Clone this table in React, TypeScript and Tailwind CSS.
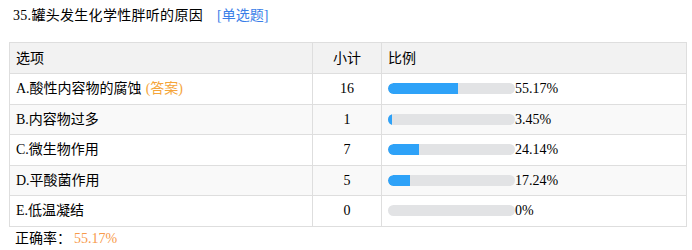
const rows = [
  { label: "A.酸性内容物的腐蚀", answer: true, count: 16, pct: 55.17, text: "55.17%" },
  { label: "B.内容物过多", answer: false, count: 1, pct: 3.45, text: "3.45%" },
  { label: "C.微生物作用", answer: false, count: 7, pct: 24.14, text: "24.14%" },
  { label: "D.平酸菌作用", answer: false, count: 5, pct: 17.24, text: "17.24%" },
  { label: "E.低温凝结", answer: false, count: 0, pct: 0, text: "0%" },
];

export default function App() {
  return (
    <div
      className="w-[692px] h-[250px] bg-white text-[14px] text-black overflow-hidden"
      style={{ fontFamily: '"Liberation Serif", "Noto Sans CJK SC", serif' }}
    >
      <div className="pl-[13px] pt-[6px] h-[42px] leading-[20px]">
        <span className="tracking-[0.3px]">35.罐头发生化学性胖听的原因</span>
        <span className="ml-[14px] text-[#3a7ee8]">[单选题]</span>
      </div>
      <table className="ml-[9px] w-[677px] border-collapse table-fixed">
        <colgroup>
          <col className="w-[303px]" />
          <col className="w-[69px]" />
          <col className="w-[305px]" />
        </colgroup>
        <thead>
          <tr className="h-[31px] bg-[#f2f2f2]">
            <th className="border border-[#dedede] text-left font-normal pl-[6px] py-0">选项</th>
            <th className="border border-[#dedede] font-normal text-center py-0">小计</th>
            <th className="border border-[#dedede] text-left font-normal pl-[6px] py-0">比例</th>
          </tr>
        </thead>
        <tbody>
          {rows.map((r, i) => (
            <tr key={r.label} className={`h-[30.5px] ${i % 2 === 1 ? "bg-[#f9f9f9]" : "bg-white"}`}>
              <td className="border border-[#dedede] pl-[6px] py-0">
                {r.label}
                {r.answer && <span className="ml-1 text-[#f5a53a]">(答案)</span>}
              </td>
              <td className="border border-[#dedede] text-center py-0">{r.count}</td>
              <td className="border border-[#dedede] pl-[6px] py-0">
                <div className="flex items-center">
                  <div className="w-[127px] h-[11px] rounded-full bg-[#e2e3e5] overflow-hidden">
                    <div className="h-full rounded-l-full bg-[#2ea2f8]" style={{ width: `${r.pct}%` }} />
                  </div>
                  <span>{r.text}</span>
                </div>
              </td>
            </tr>
          ))}
        </tbody>
      </table>
      <div className="pl-[15px] pt-[2px] leading-[20px]">
        正确率：<span className="ml-[3px] text-[#f79a4a]">55.17%</span>
      </div>
    </div>
  );
}
